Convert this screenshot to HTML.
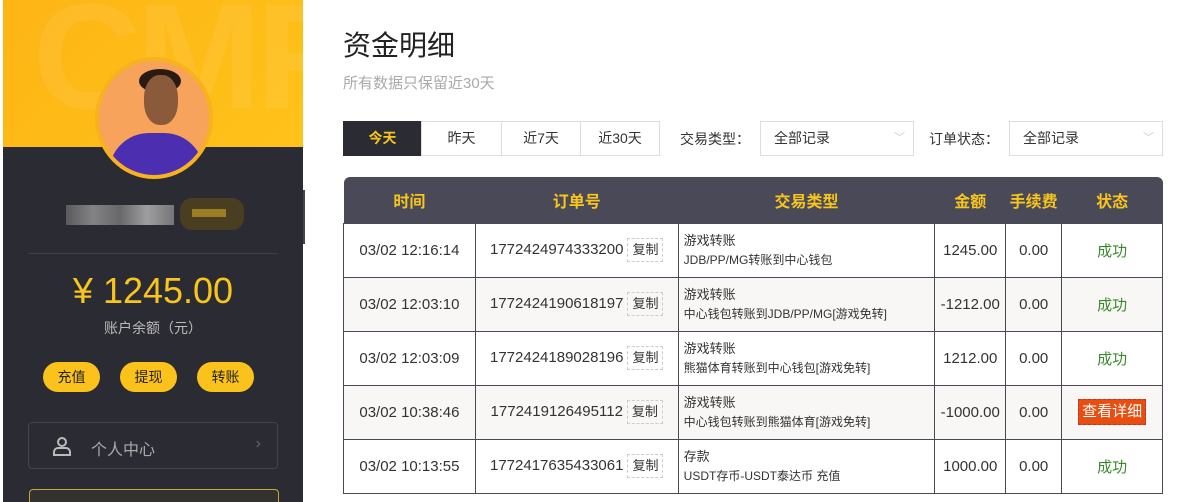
<!DOCTYPE html>
<html><head><meta charset="utf-8"><style>
*{margin:0;padding:0;box-sizing:border-box}
html,body{width:1178px;height:502px;overflow:hidden}
body{background:#fff;font-family:"Liberation Sans","Noto Sans CJK SC",sans-serif;position:relative;color:#333}
.side{position:absolute;left:3px;top:0;width:300px;height:502px;background:#2b2b33;overflow:hidden}
.hero{position:absolute;left:0;top:0;width:300px;height:147px;background:linear-gradient(135deg,#fdb515,#ffc21a);overflow:hidden}
.hero span{position:absolute;left:30px;top:-30px;font-size:150px;font-weight:bold;color:rgba(255,255,255,0.07);letter-spacing:-5px}
.av{position:absolute;left:92px;top:57px;width:118px;height:122px;border-radius:50%;background:#f7a35c;border:4px solid #f7b21d;overflow:hidden}
.av .shirt{position:absolute;left:10px;top:72px;width:95px;height:60px;background:#4b2fb0;border-radius:40px 40px 0 0}
.av .head{position:absolute;left:45px;top:14px;width:34px;height:50px;background:#8a5a3a;border-radius:45%}
.av .hair{position:absolute;left:40px;top:8px;width:42px;height:24px;background:#2a1b12;border-radius:50%}
.blur1{position:absolute;left:63px;top:205px;width:108px;height:20px;background:linear-gradient(90deg,#666,#999,#777,#bbb,#888);opacity:.8}
.blur2{position:absolute;left:177px;top:198px;width:64px;height:32px;background:#4a3e22;border-radius:12px}
.blur2 i{position:absolute;left:12px;top:11px;width:34px;height:8px;background:#9a7e26}
.hr{position:absolute;left:25px;top:253px;width:249px;height:1px;background:#3f3f4a}
.bal{position:absolute;left:0;width:300px;top:270px;text-align:center;color:#f8c51c;font-size:36px}
.bal2{position:absolute;left:0;width:300px;top:318px;text-align:center;color:#bbb;font-size:14px}
.btn{position:absolute;top:362px;width:57px;height:30px;border-radius:15px;background:#fbc21b;color:#222;font-size:14px;text-align:center;line-height:30px}
.menu{position:absolute;left:25px;top:422px;width:250px;height:47px;border:1px solid #444452;border-radius:4px;color:#aaa;font-size:16px}
.menu2{position:absolute;left:26px;top:489px;width:250px;height:30px;border:1px solid #c9a23a;border-radius:4px;background:#34322e}
.bar{position:absolute;left:303px;top:190px;width:2px;height:54px;background:#444}
h1{position:absolute;left:343px;top:24px;font-size:28px;font-weight:normal;color:#222}
.sub{position:absolute;left:343px;top:72px;font-size:15px;color:#aaa}
.tab{position:absolute;top:121px;height:35px;border:1px solid #ddd;text-align:center;line-height:33px;font-size:14px;color:#333}
.lbl{position:absolute;top:129px;font-size:14px;color:#333}
.sel{position:absolute;top:121px;height:35px;border:1px solid #ddd;font-size:14px;line-height:33px;padding-left:13px}
.sel b{position:absolute;right:8px;top:0;color:#ccc;font-weight:normal;font-size:11px}
table{position:absolute;left:343px;top:177px;width:820px;border-collapse:collapse;font-size:15px}
th{background:#4a4957;color:#f8c51c;height:46px;font-size:16px;font-weight:bold}
td{border:1px solid #4a4a55;height:54px;text-align:center;color:#333}
tr.g td{background:#f8f7f5}
td.t{text-align:left;padding-left:5px;font-size:13px;line-height:19px}
td.t small{font-size:12px}
.cp{display:inline-block;border:1px dashed #ccc;padding:0 4px;margin-left:4px;line-height:22px;font-size:13px}
.ok{color:#3a8a2a}
.det{display:inline-block;background:#e84e0f;color:#fff;border:1px dashed #b33;padding:0 3px;line-height:24px}
</style></head><body>
<div class="side">
<div class="hero"><span>CMF</span></div>
<div class="av"><div class="shirt"></div><div class="hair"></div><div class="head"></div></div>
<div class="blur1"></div><div class="blur2"><i></i></div>
<div class="hr"></div>
<div class="bal">¥ 1245.00</div>
<div class="bal2">账户余额（元）</div>
<div class="btn" style="left:40px">充值</div>
<div class="btn" style="left:117px">提现</div>
<div class="btn" style="left:194px">转账</div>
<div class="menu"><svg style="position:absolute;left:23px;top:13px" width="20" height="20" viewBox="0 0 20 20" fill="none" stroke="#bbb" stroke-width="2"><circle cx="10" cy="6" r="4"/><path d="M2 19v-3a4 4 0 0 1 4-4h8a4 4 0 0 1 4 4v3z"/></svg><span style="position:absolute;left:62px;top:13px">个人中心</span><span style="position:absolute;right:16px;top:12px;color:#666">›</span></div>
<div class="menu2"></div>
</div>
<div class="bar"></div>
<h1>资金明细</h1>
<div class="sub">所有数据只保留近30天</div>
<div class="tab" style="left:343px;width:79px;background:#2b2b33;color:#f8c51c;border-color:#2b2b33;font-weight:bold">今天</div>
<div class="tab" style="left:421px;width:81px">昨天</div>
<div class="tab" style="left:501px;width:80px">近7天</div>
<div class="tab" style="left:580px;width:80px">近30天</div>
<div class="lbl" style="left:680px">交易类型：</div>
<div class="sel" style="left:760px;width:154px">全部记录<b>﹀</b></div>
<div class="lbl" style="left:929px">订单状态：</div>
<div class="sel" style="left:1009px;width:154px">全部记录<b>﹀</b></div>
<table>
<colgroup><col style="width:132px"><col style="width:203px"><col style="width:257px"><col style="width:71px"><col style="width:56px"><col style="width:101px"></colgroup>
<tr><th style="border-radius:6px 0 0 0">时间</th><th>订单号</th><th>交易类型</th><th>金额</th><th>手续费</th><th style="border-radius:0 6px 0 0">状态</th></tr>
<tr><td>03/02 12:16:14</td><td>1772424974333200<span class="cp">复制</span></td><td class="t">游戏转账<br><small>JDB/PP/MG转账到中心钱包</small></td><td>1245.00</td><td>0.00</td><td class="ok">成功</td></tr>
<tr class="g"><td>03/02 12:03:10</td><td>1772424190618197<span class="cp">复制</span></td><td class="t">游戏转账<br><small>中心钱包转账到JDB/PP/MG[游戏免转]</small></td><td>-1212.00</td><td>0.00</td><td class="ok">成功</td></tr>
<tr><td>03/02 12:03:09</td><td>1772424189028196<span class="cp">复制</span></td><td class="t">游戏转账<br><small>熊猫体育转账到中心钱包[游戏免转]</small></td><td>1212.00</td><td>0.00</td><td class="ok">成功</td></tr>
<tr class="g"><td>03/02 10:38:46</td><td>1772419126495112<span class="cp">复制</span></td><td class="t">游戏转账<br><small>中心钱包转账到熊猫体育[游戏免转]</small></td><td>-1000.00</td><td>0.00</td><td><span class="det">查看详细</span></td></tr>
<tr><td>03/02 10:13:55</td><td>1772417635433061<span class="cp">复制</span></td><td class="t">存款<br><small>USDT存币-USDT泰达币 充值</small></td><td>1000.00</td><td>0.00</td><td class="ok">成功</td></tr>
</table>
</body></html>
